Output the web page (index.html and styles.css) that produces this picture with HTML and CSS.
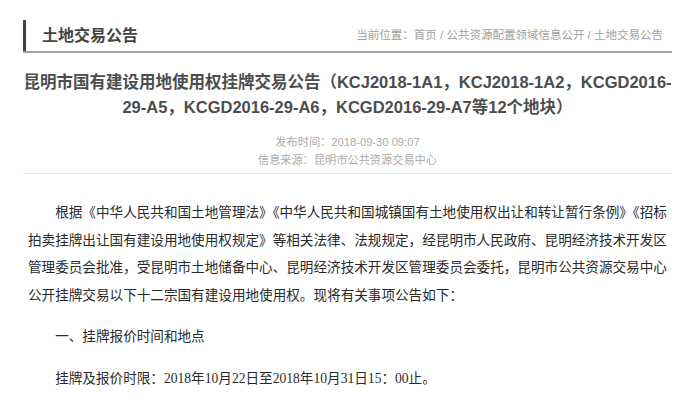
FILE: index.html
```html
<!DOCTYPE html>
<html lang="zh-CN">
<head>
<meta charset="utf-8">
<title>土地交易公告</title>
<link rel="stylesheet" href="styles.css">
</head>
<body>
<div class="page">
  <div class="header">
    <h2 class="section-title">土地交易公告</h2>
    <div class="crumbs">当前位置：首页 / 公共资源配置领域信息公开 / 土地交易公告</div>
  </div>
  <h1 class="title">昆明市国有建设用地使用权挂牌交易公告（KCJ2018-1A1，KCJ2018-1A2，KCGD2016-<br>29-A5，KCGD2016-29-A6，KCGD2016-29-A7等12个地块）</h1>
  <div class="meta">
    <div>发布时间：2018-09-30 09:07</div>
    <div>信息来源：昆明市公共资源交易中心</div>
  </div>
  <div class="content">
    <p class="para">根据《中华人民共和国土地管理法》《中华人民共和国城镇国有土地使用权出让和转让暂行条例》《招标<br>拍卖挂牌出让国有建设用地使用权规定》等相关法律、法规规定，经昆明市人民政府、昆明经济技术开发区<br>管理委员会批准，受昆明市土地储备中心、昆明经济技术开发区管理委员会委托，昆明市公共资源交易中心<br>公开挂牌交易以下十二宗国有建设用地使用权。现将有关事项公告如下：</p>
    <p class="para">一、挂牌报价时间和地点</p>
    <p class="para">挂牌及报价时限：2018年10月22日至2018年10月31日15：00止。</p>
  </div>
</div>
</body>
</html>
```

FILE: styles.css
```css
html, body {
  margin: 0;
  padding: 0;
  background: #ffffff;
}

body {
  font-family: "Liberation Sans", "Noto Sans CJK SC", sans-serif;
  color: #333;
}

.page {
  padding: 20px 28px 0 23px;
}

.header {
  display: flex;
  justify-content: space-between;
  align-items: center;
  height: 31px;
  border-bottom: 2px solid #a4a4a4;
}

.section-title {
  margin: 0;
  height: 31px;
  line-height: 31px;
  border-left: 3px solid #3b4452;
  padding-left: 16px;
  font-size: 16px;
  font-weight: bold;
  color: #444;
}

.crumbs {
  font-size: 11.5px;
  color: #a0a0a0;
  padding-right: 9px;
  line-height: 31px;
}

.title {
  margin: 17px 0 0;
  text-align: center;
  font-size: 16.5px;
  line-height: 25px;
  font-weight: bold;
  color: #4d4d4d;
  white-space: nowrap;
}

.meta {
  margin-top: 13px;
  padding-bottom: 4px;
  border-bottom: 1px solid #e2e2e2;
  text-align: center;
  font-size: 11.2px;
  line-height: 18px;
  color: #ababab;
}

.content {
  padding: 25px 0 0 5px;
  font-family: "Liberation Serif", "Noto Sans CJK SC", serif;
  font-size: 13.6px;
  color: #2a2a2a;
}

.para {
  margin: 0 0 14px;
  line-height: 27.6px;
  text-indent: 2em;
  white-space: nowrap;
}
```
